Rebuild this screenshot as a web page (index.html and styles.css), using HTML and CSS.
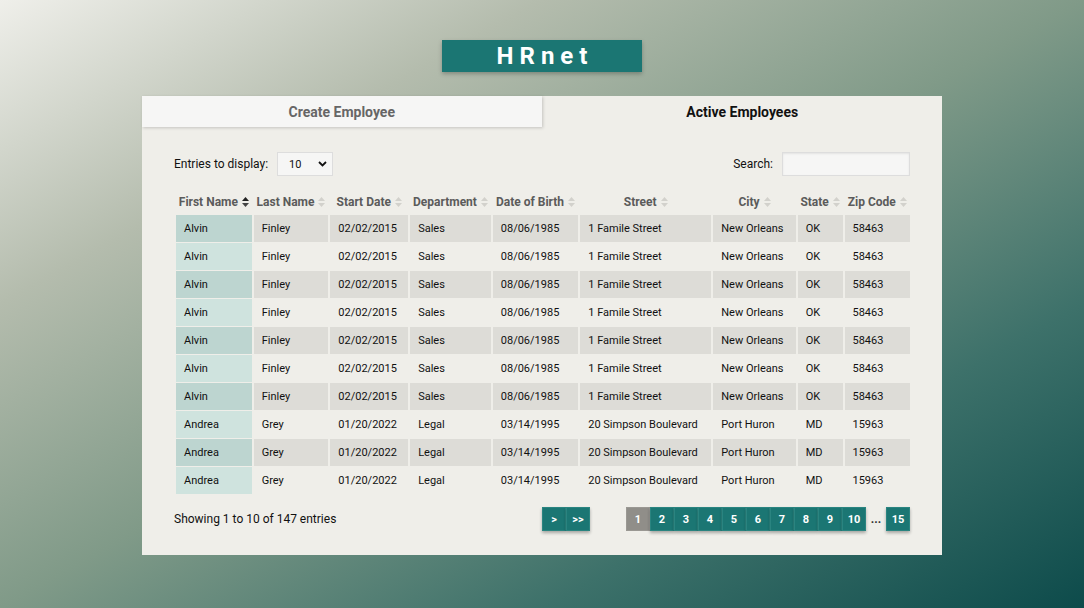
FILE: index.html
```html
<!DOCTYPE html>
<html lang="en">
<head>
  <meta charset="UTF-8">
  <meta name="viewport" content="width=device-width, initial-scale=1.0">
  <title>HRnet</title>
  <link rel="stylesheet" href="styles.css">
</head>
<body>
  <header class="brand">
    <h1>HRnet</h1>
  </header>

  <main class="card">
    <nav class="tabs">
      <a class="tab" href="#">Create Employee</a>
      <a class="tab active" href="#">Active Employees</a>
    </nav>

    <section class="panel">
      <div class="controls">
        <label class="entries">Entries to display:
          <span class="select">10
            <svg width="9" height="6" viewBox="0 0 9 6"><path d="M1 1l3.5 3.5L8 1" fill="none" stroke="#111" stroke-width="1.8"/></svg>
          </span>
        </label>
        <label class="search">Search: <input type="text"></label>
      </div>

      <table class="employees">
        <thead>
          <tr>
            <th class="c-first">First Name <svg class="sort asc" viewBox="0 0 7 10"><path class="up" d="M0 4L3.5 0 7 4z"/><path class="down" d="M0 6h7L3.5 10z"/></svg></th>
            <th class="c-last">Last Name <svg class="sort" viewBox="0 0 7 10"><path class="up" d="M0 4L3.5 0 7 4z"/><path class="down" d="M0 6h7L3.5 10z"/></svg></th>
            <th class="c-start">Start Date <svg class="sort" viewBox="0 0 7 10"><path class="up" d="M0 4L3.5 0 7 4z"/><path class="down" d="M0 6h7L3.5 10z"/></svg></th>
            <th class="c-dept">Department <svg class="sort" viewBox="0 0 7 10"><path class="up" d="M0 4L3.5 0 7 4z"/><path class="down" d="M0 6h7L3.5 10z"/></svg></th>
            <th class="c-birth">Date of Birth <svg class="sort" viewBox="0 0 7 10"><path class="up" d="M0 4L3.5 0 7 4z"/><path class="down" d="M0 6h7L3.5 10z"/></svg></th>
            <th class="c-street">Street <svg class="sort" viewBox="0 0 7 10"><path class="up" d="M0 4L3.5 0 7 4z"/><path class="down" d="M0 6h7L3.5 10z"/></svg></th>
            <th class="c-city">City <svg class="sort" viewBox="0 0 7 10"><path class="up" d="M0 4L3.5 0 7 4z"/><path class="down" d="M0 6h7L3.5 10z"/></svg></th>
            <th class="c-state">State <svg class="sort" viewBox="0 0 7 10"><path class="up" d="M0 4L3.5 0 7 4z"/><path class="down" d="M0 6h7L3.5 10z"/></svg></th>
            <th class="c-zip">Zip Code <svg class="sort" viewBox="0 0 7 10"><path class="up" d="M0 4L3.5 0 7 4z"/><path class="down" d="M0 6h7L3.5 10z"/></svg></th>
          </tr>
        </thead>
        <tbody>
          <tr><td>Alvin</td><td>Finley</td><td>02/02/2015</td><td>Sales</td><td>08/06/1985</td><td>1 Famile Street</td><td>New Orleans</td><td>OK</td><td>58463</td></tr>
          <tr><td>Alvin</td><td>Finley</td><td>02/02/2015</td><td>Sales</td><td>08/06/1985</td><td>1 Famile Street</td><td>New Orleans</td><td>OK</td><td>58463</td></tr>
          <tr><td>Alvin</td><td>Finley</td><td>02/02/2015</td><td>Sales</td><td>08/06/1985</td><td>1 Famile Street</td><td>New Orleans</td><td>OK</td><td>58463</td></tr>
          <tr><td>Alvin</td><td>Finley</td><td>02/02/2015</td><td>Sales</td><td>08/06/1985</td><td>1 Famile Street</td><td>New Orleans</td><td>OK</td><td>58463</td></tr>
          <tr><td>Alvin</td><td>Finley</td><td>02/02/2015</td><td>Sales</td><td>08/06/1985</td><td>1 Famile Street</td><td>New Orleans</td><td>OK</td><td>58463</td></tr>
          <tr><td>Alvin</td><td>Finley</td><td>02/02/2015</td><td>Sales</td><td>08/06/1985</td><td>1 Famile Street</td><td>New Orleans</td><td>OK</td><td>58463</td></tr>
          <tr><td>Alvin</td><td>Finley</td><td>02/02/2015</td><td>Sales</td><td>08/06/1985</td><td>1 Famile Street</td><td>New Orleans</td><td>OK</td><td>58463</td></tr>
          <tr><td>Andrea</td><td>Grey</td><td>01/20/2022</td><td>Legal</td><td>03/14/1995</td><td>20 Simpson Boulevard</td><td>Port Huron</td><td>MD</td><td>15963</td></tr>
          <tr><td>Andrea</td><td>Grey</td><td>01/20/2022</td><td>Legal</td><td>03/14/1995</td><td>20 Simpson Boulevard</td><td>Port Huron</td><td>MD</td><td>15963</td></tr>
          <tr><td>Andrea</td><td>Grey</td><td>01/20/2022</td><td>Legal</td><td>03/14/1995</td><td>20 Simpson Boulevard</td><td>Port Huron</td><td>MD</td><td>15963</td></tr>
        </tbody>
      </table>

      <div class="footer">
        <p class="info">Showing 1 to 10 of 147 entries</p>
        <div class="arrows">
          <button class="page">&gt;</button><button class="page">&gt;&gt;</button>
        </div>
        <div class="pages">
          <button class="page current">1</button><button class="page">2</button><button class="page">3</button><button class="page">4</button><button class="page">5</button><button class="page">6</button><button class="page">7</button><button class="page">8</button><button class="page">9</button><button class="page">10</button>
          <span class="dots">...</span>
          <button class="page">15</button>
        </div>
      </div>
    </section>
  </main>
</body>
</html>
```

FILE: styles.css
```css
* {
  box-sizing: border-box;
}
html, body {
  height: 100%;
}
body {
  margin: 0;
  font-family: Roboto, "Liberation Sans", sans-serif;
  color: #111;
  background: linear-gradient(to bottom right, #efefea 0%, #b4bcad 25%, #809a88 50%, #3d716a 75%, #0d4b4b 100%);
  display: flex;
  flex-direction: column;
  align-items: center;
  padding-top: 40px;
}
.brand h1 {
  margin: 0;
  width: 200px;
  height: 32px;
  background-color: #1b7673;
  color: #fff;
  font-size: 24px;
  font-weight: 700;
  letter-spacing: 6px;
  text-indent: 6px;
  line-height: 32px;
  text-align: center;
  box-shadow: 0 2px 4px rgba(0, 0, 0, 0.25);
}
.card {
  margin-top: 24px;
  width: 800px;
  background-color: #efeee9;
}
.tabs {
  display: flex;
  height: 31px;
}
.tab {
  flex: 1;
  text-align: center;
  line-height: 31px;
  padding-top: 1px;
  font-size: 14px;
  font-weight: 700;
  text-decoration: none;
  color: #111;
}
.tab:first-child {
  background-color: #f6f6f5;
  color: #666;
  box-shadow: 1px 1px 3px rgba(0, 0, 0, 0.18);
  position: relative;
  margin-right: 1px;
}
.panel {
  padding: 25px 32px 24px 32px;
}
.controls {
  display: flex;
  justify-content: space-between;
  align-items: center;
  font-size: 12px;
  margin-bottom: 14px;
}
.entries, .search {
  display: flex;
  align-items: center;
  gap: 9px;
}
.select {
  width: 56px;
  height: 24px;
  background-color: #f6f6f5;
  border: 1px solid #ddd;
  display: flex;
  align-items: center;
  justify-content: space-between;
  padding: 0 5px 0 11px;
  font-size: 11px;
}
.search input {
  width: 128px;
  height: 24px;
  border: 1px solid #ddd;
  background-color: #f6f6f5;
  box-shadow: inset 0 1px 2px rgba(0, 0, 0, 0.08);
}
.employees {
  border-spacing: 2px 1px;
  margin: 0 -2px 0 0;
  width: calc(100% + 2px);
  font-size: 11px;
}
.employees th {
  font-size: 12px;
  font-weight: 700;
  color: #5b5b5b;
  height: 23px;
  padding: 0 1px 1px;
  white-space: nowrap;
  text-align: center;
}
.sort {
  width: 7px;
  height: 10px;
  margin-left: 1px;
  vertical-align: -1px;
}
.sort path {
  fill: #d2d1cc;
}
.sort.asc .up {
  fill: #222;
}
.sort.asc .down {
  fill: #444;
}
.employees td {
  height: 27px;
  padding: 0 8px;
  white-space: nowrap;
}
.employees tbody tr:nth-child(odd) td {
  background-color: #dddcd7;
}
.employees tbody tr:nth-child(odd) td:first-child {
  background-color: #bdd5d0;
}
.employees tbody tr:nth-child(even) td:first-child {
  background-color: #cfe3de;
}
.c-first { width: 77px; }
.c-last { width: 76px; }
.c-start { width: 79px; }
.c-dept { width: 82px; }
.c-birth { width: 87px; }
.c-street { width: 133px; }
.c-city { width: 84px; }
.c-state { width: 46px; }
.c-zip { width: 67px; }
.footer {
  display: flex;
  align-items: center;
  margin-top: 12px;
}
.info {
  margin: 0;
  font-size: 12px;
  width: 368px;
}
.arrows, .pages {
  display: flex;
  align-items: center;
}
.pages {
  margin-left: auto;
}
.page {
  width: 24px;
  height: 24px;
  border: 1px solid #2a8480;
  background-color: #1b7673;
  color: #fff;
  font-family: Roboto, "Liberation Sans", sans-serif;
  font-size: 11px;
  font-weight: 700;
  padding: 0;
  box-shadow: 0 2px 3px rgba(0, 0, 0, 0.3);
}
.page.current {
  background-color: #908e89;
  border-color: #9a9893;
  box-shadow: none;
}
.dots {
  width: 20px;
  text-align: center;
  font-size: 12px;
  font-weight: 700;
  color: #333;
}
```
